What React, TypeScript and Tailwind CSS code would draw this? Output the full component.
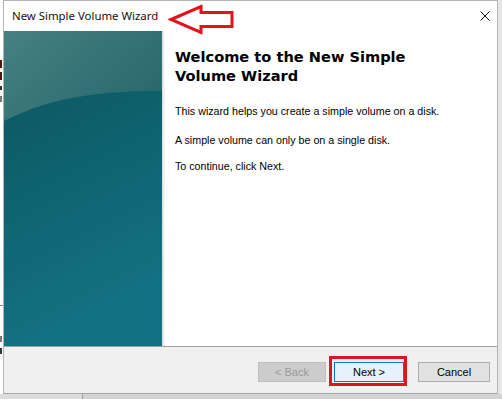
import React from "react";

function TealPanel() {
  return (
    <svg width="158" height="315" viewBox="0 0 158 315" className="block">
      <defs>
        <linearGradient id="lower" x1="0" y1="0" x2="0.25" y2="1">
          <stop offset="0" stopColor="#0a545e" />
          <stop offset="0.5" stopColor="#0f626f" />
          <stop offset="1" stopColor="#137282" />
        </linearGradient>
        <linearGradient id="upper" x1="0" y1="0" x2="1" y2="0.6">
          <stop offset="0" stopColor="#478080" />
          <stop offset="1" stopColor="#2a6a6f" />
        </linearGradient>
      </defs>
      <rect x="0" y="0" width="158" height="315" fill="url(#lower)" />
      <path d="M0,0 L158,0 L158,60 Q60,58 0,90 Z" fill="url(#upper)" />
    </svg>
  );
}

function CloseIcon() {
  return (
    <svg width="10" height="10" viewBox="0 0 10 10">
      <path d="M0.5,0.5 L9.5,9.5 M9.5,0.5 L0.5,9.5" stroke="#111" strokeWidth="1" />
    </svg>
  );
}

export default function App() {
  return (
    <div className="relative w-[502px] h-[399px] overflow-hidden bg-white flex flex-col" style={{ fontFamily: '"Liberation Sans", Arial, sans-serif' }}>
      <div className="flex h-[394px]">
        <div className="w-[3px] bg-white flex flex-col">
          <div className="h-[60px]" />
          <div className="h-[8px] w-[2px] bg-[#5a1010]" />
          <div className="h-[4px]" />
          <div className="h-[8px] w-[2px] bg-[#5a1010]" />
          <div className="h-[6px]" />
          <div className="h-[4px] w-[2px] bg-[#333]" />
          <div className="h-[6px]" />
          <div className="h-[6px] w-[2px] bg-[#777]" />
          <div className="flex-1" />
          <div className="h-[1px] bg-[#888]" />
          <div className="h-[30px]" />
          <div className="h-[6px] w-[2px] bg-[#777]" />
          <div className="h-[6px]" />
          <div className="h-[6px] w-[2px] bg-[#334]" />
          <div className="h-[40px]" />
        </div>
        <div className="w-[495px] border-t border-l border-r border-[#b4b4b4] flex flex-col bg-white">
          <div className="h-[30px] flex items-center justify-between pl-[8px] pr-[7px]">
            <span className="text-[11.4px] text-[#111]" style={{ fontFamily: '"Noto Sans", sans-serif' }}>New Simple Volume Wizard</span>
            <CloseIcon />
          </div>
          <div className="flex h-[315px]">
            <TealPanel />
            <div className="w-[3px] bg-gradient-to-r from-[#d6d6d6] to-white" />
            <div className="flex-1 pl-[10px] pt-[16px]">
              <div className="text-[14.6px] leading-[19px] font-bold text-black" style={{ fontFamily: '"DejaVu Sans", Verdana, sans-serif' }}>
                Welcome to the New Simple
                <br />
                Volume Wizard
              </div>
              <div className="text-[10.7px] text-black mt-[19px] leading-[14px]">This wizard helps you create a simple volume on a disk.</div>
              <div className="text-[10.7px] text-black mt-[15px] leading-[14px]">A simple volume can only be on a single disk.</div>
              <div className="text-[10.7px] text-black mt-[12px] leading-[14px]">To continue, click Next.</div>
            </div>
          </div>
          <div className="h-[1px] bg-[#a0a0a0]" />
          <div className="flex-1 bg-[#f0f0f0] flex items-start justify-end pt-[15px] pr-[7px] border-b border-[#a8a8a8]">
            <div className="w-[68px] h-[20px] bg-[#cccccc] border border-[#bfbfbf] flex items-center justify-center text-[11px] text-[#9a9a9a]">&lt; Back</div>
            <div className="w-[70px] h-[20px] ml-[8px] bg-[#e5f1fb] border border-[#0078d7] flex items-center justify-center text-[11px] text-black">Next &gt;</div>
            <div className="w-[72px] h-[20px] ml-[14px] bg-[#e1e1e1] border border-[#adadad] flex items-center justify-center text-[11px] text-black">Cancel</div>
          </div>
        </div>
        <div className="flex-1 bg-[#e6e6e6]" />
      </div>
      <div className="flex-1 flex bg-[#d4d4d4]">
        <div className="w-[83px] bg-[#dcdcdc] border-r border-[#a0a0a0]" />
        <div className="flex-1" />
      </div>

      <div className="absolute left-[329px] top-[356px] w-[78px] h-[30px] border-[3px] border-[#e3131d]" />

      <svg className="absolute left-[167px] top-[3px]" width="70" height="34" viewBox="0 0 70 34">
        <path d="M4,16.5 L34,3.5 L34,9.5 L65,9.5 L65,23.5 L34,23.5 L34,29.5 Z" fill="white" stroke="#e3131d" strokeWidth="3" strokeLinejoin="miter" />
      </svg>
    </div>
  );
}
